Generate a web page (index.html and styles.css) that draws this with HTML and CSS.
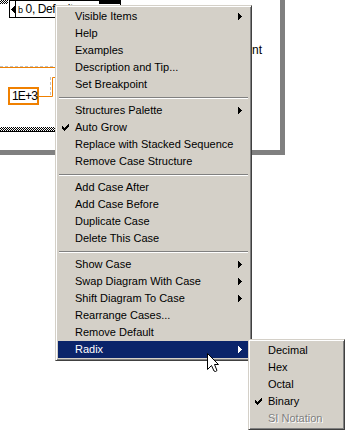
FILE: index.html
```html
<!DOCTYPE html>
<html lang="en">
<head>
  <meta charset="UTF-8" />
  <title>Case Structure Menu</title>
  <link rel="stylesheet" href="styles.css">
</head>
<body>
<div class="diagram">
  <!-- block diagram behind the menu -->
  <div class="case-frame"></div>
  <div class="hatch hatch-corner"></div>
  <div class="hatch hatch-line"></div>

  <svg class="wires" width="352" height="434">
    <line x1="0" y1="66.5" x2="60" y2="66.5" stroke="#c0c0c0" stroke-dasharray="3 2"/>
    <line x1="0" y1="67.5" x2="60" y2="67.5" stroke="#f08000"/>
    <line x1="50.5" y1="77" x2="50.5" y2="97" stroke="#c0c0c0" stroke-dasharray="3 2"/>
    <polyline points="39,96.5 52.5,96.5 52.5,77.5 60,77.5" fill="none" stroke="#f08000"/>
  </svg>

  <div class="selector">
    <span class="dec">
      <svg width="4" height="7" viewBox="0 0 4 7"><path d="M3 0h1v7H3zM2 1h1v5H2zM1 2h1v3H1zM0 3h1v1H0z"/></svg>
    </span>
    <span class="radix">b</span>
    <span class="value">0, Default</span>
    <span class="inc"></span>
  </div>

  <div class="label-text">Element</div>

  <div class="const">1E+3</div>

  <!-- shortcut menu -->
  <div class="menu main-menu">
    <div class="item"><span class="mark"></span><span class="label">Visible Items</span>
      <svg class="arrow" width="4" height="7" viewBox="0 0 4 7"><path d="M0 0h1v7H0zM1 1h1v5H1zM2 2h1v3H2zM3 3h1v1H3z"/></svg></div>
    <div class="item"><span class="mark"></span><span class="label">Help</span></div>
    <div class="item"><span class="mark"></span><span class="label">Examples</span></div>
    <div class="item"><span class="mark"></span><span class="label">Description and Tip...</span></div>
    <div class="item"><span class="mark"></span><span class="label">Set Breakpoint</span></div>
    <div class="sep"></div>
    <div class="item"><span class="mark"></span><span class="label">Structures Palette</span>
      <svg class="arrow" width="4" height="7" viewBox="0 0 4 7"><path d="M0 0h1v7H0zM1 1h1v5H1zM2 2h1v3H2zM3 3h1v1H3z"/></svg></div>
    <div class="item"><span class="mark">
      <svg width="7" height="7" viewBox="0 0 7 7"><path d="M0 2h1v3H0zM1 3h1v3H1zM2 4h1v3H2zM3 3h1v3H3zM4 2h1v3H4zM5 1h1v3H5zM6 0h1v3H6z"/></svg>
    </span><span class="label">Auto Grow</span></div>
    <div class="item"><span class="mark"></span><span class="label">Replace with Stacked Sequence</span></div>
    <div class="item"><span class="mark"></span><span class="label">Remove Case Structure</span></div>
    <div class="sep"></div>
    <div class="item"><span class="mark"></span><span class="label">Add Case After</span></div>
    <div class="item"><span class="mark"></span><span class="label">Add Case Before</span></div>
    <div class="item"><span class="mark"></span><span class="label">Duplicate Case</span></div>
    <div class="item"><span class="mark"></span><span class="label">Delete This Case</span></div>
    <div class="sep"></div>
    <div class="item"><span class="mark"></span><span class="label">Show Case</span>
      <svg class="arrow" width="4" height="7" viewBox="0 0 4 7"><path d="M0 0h1v7H0zM1 1h1v5H1zM2 2h1v3H2zM3 3h1v1H3z"/></svg></div>
    <div class="item"><span class="mark"></span><span class="label">Swap Diagram With Case</span>
      <svg class="arrow" width="4" height="7" viewBox="0 0 4 7"><path d="M0 0h1v7H0zM1 1h1v5H1zM2 2h1v3H2zM3 3h1v1H3z"/></svg></div>
    <div class="item"><span class="mark"></span><span class="label">Shift Diagram To Case</span>
      <svg class="arrow" width="4" height="7" viewBox="0 0 4 7"><path d="M0 0h1v7H0zM1 1h1v5H1zM2 2h1v3H2zM3 3h1v1H3z"/></svg></div>
    <div class="item"><span class="mark"></span><span class="label">Rearrange Cases...</span></div>
    <div class="item"><span class="mark"></span><span class="label">Remove Default</span></div>
    <div class="item active"><span class="mark"></span><span class="label">Radix</span>
      <svg class="arrow" width="4" height="7" viewBox="0 0 4 7"><path d="M0 0h1v7H0zM1 1h1v5H1zM2 2h1v3H2zM3 3h1v1H3z"/></svg></div>
  </div>

  <div class="menu sub-menu">
    <div class="item"><span class="mark"></span><span class="label">Decimal</span></div>
    <div class="item"><span class="mark"></span><span class="label">Hex</span></div>
    <div class="item"><span class="mark"></span><span class="label">Octal</span></div>
    <div class="item"><span class="mark">
      <svg width="7" height="7" viewBox="0 0 7 7"><path d="M0 2h1v3H0zM1 3h1v3H1zM2 4h1v3H2zM3 3h1v3H3zM4 2h1v3H4zM5 1h1v3H5zM6 0h1v3H6z"/></svg>
    </span><span class="label">Binary</span></div>
    <div class="item disabled"><span class="mark"></span><span class="label">SI Notation</span></div>
  </div>

  <svg class="cursor" width="14" height="21" viewBox="0 0 14 21">
    <path d="M0.5 0.5L11.5 11.5H7.5L10 17.5L8.5 18.5L7 18L4.5 12.5L0.5 16.5Z" fill="#fff" stroke="#000" stroke-linejoin="miter"/>
  </svg>
</div>
</body>
</html>
```

FILE: styles.css
```css
body {
  margin: 0;
  background: #fff;
  font-family: "Liberation Sans", Arial, sans-serif;
}

.diagram {
  position: relative;
  width: 352px;
  height: 434px;
  overflow: hidden;
}

.case-frame {
  position: absolute;
  left: -10px;
  top: -10px;
  width: 290px;
  height: 160px;
  border-right: 5px solid #808080;
  border-bottom: 5px solid #808080;
}

.hatch {
  position: absolute;
  background: repeating-conic-gradient(#000 0 25%, #fff 0 50%) 0 0 / 2px 2px;
}

.hatch-corner {
  left: 0;
  top: 0;
  width: 8px;
  height: 4px;
}

.hatch-line {
  left: 0;
  top: 127px;
  width: 120px;
  height: 4px;
  border-bottom: 1px solid #000;
}

.wires {
  position: absolute;
  left: 0;
  top: 0;
}

.selector {
  position: absolute;
  left: 9px;
  top: 0;
  width: 110px;
  height: 16px;
  border: 1px solid #000;
  display: flex;
  align-items: center;
  background: #fff;
  font-size: 12px;
  letter-spacing: -0.4px;
  line-height: 16px;
}

.selector .dec {
  width: 5px;
  height: 16px;
  border-right: 1px solid #000;
  display: flex;
  align-items: center;
  justify-content: center;
}

.selector .radix {
  font-size: 9px;
  margin: 1px 3px 0 2px;
}

.selector .value {
  flex: 1;
}

.selector .inc {
  align-self: flex-start;
  width: 21px;
  height: 3px;
  background: #000;
}

.label-text {
  position: absolute;
  right: 90px;
  top: 43px;
  font-size: 12px;
  line-height: 15px;
}

.const {
  position: absolute;
  left: 8px;
  top: 87px;
  width: 25px;
  height: 14px;
  padding-left: 2px;
  border: 2px solid #f08000;
  background: #fff;
  font-size: 12px;
  letter-spacing: -0.8px;
  line-height: 15px;
}

/* classic popup menu */
.menu {
  position: absolute;
  background: #d4d0c8;
  border: 1px solid;
  border-color: #d4d0c8 #404040 #404040 #d4d0c8;
  box-shadow: inset 1px 1px #fff, inset -1px -1px #808080;
  padding: 2px;
  font-size: 11px;
  color: #000;
}

.main-menu {
  left: 55px;
  top: 5px;
  width: 191px;
}

.sub-menu {
  left: 248px;
  top: 339px;
  width: 91px;
}

.item {
  display: flex;
  align-items: center;
  height: 17px;
  line-height: 17px;
  padding-right: 7px;
  white-space: nowrap;
}

.mark {
  width: 17px;
  flex: none;
  display: flex;
  align-items: center;
  padding-left: 4px;
  box-sizing: border-box;
}

.mark svg,
.arrow {
  fill: currentColor;
}

.label {
  flex: 1;
}

.arrow {
  flex: none;
}

.item.active {
  background: #0a246a;
  color: #fff;
}

.item.disabled {
  color: #808080;
  text-shadow: 1px 1px 0 #fff;
}

.sep {
  height: 0;
  margin: 4px 1px 3px;
  border-top: 1px solid #808080;
  border-bottom: 1px solid #fff;
}

.cursor {
  position: absolute;
  left: 207px;
  top: 353px;
}
```
